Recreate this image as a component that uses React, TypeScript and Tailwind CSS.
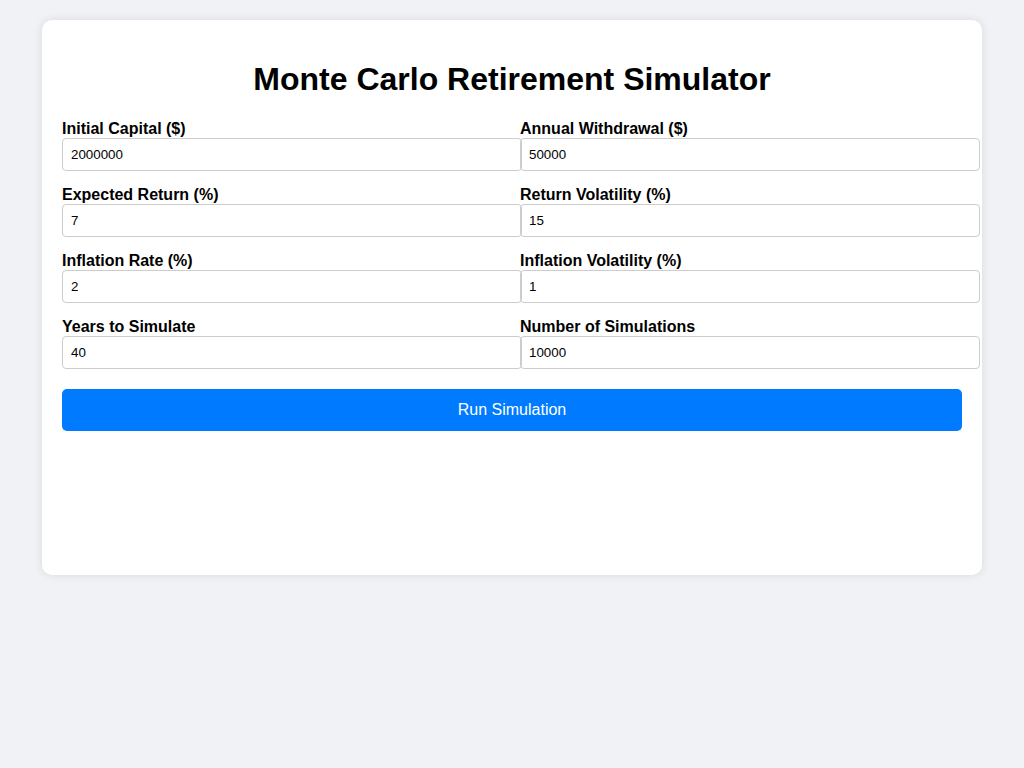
const fields: { label: string; value: string }[] = [
  { label: "Initial Capital ($)", value: "2000000" },
  { label: "Annual Withdrawal ($)", value: "50000" },
  { label: "Expected Return (%)", value: "7" },
  { label: "Return Volatility (%)", value: "15" },
  { label: "Inflation Rate (%)", value: "2" },
  { label: "Inflation Volatility (%)", value: "1" },
  { label: "Years to Simulate", value: "40" },
  { label: "Number of Simulations", value: "10000" },
];

function App(): JSX.Element {
  return (
    <div className="min-h-screen bg-[#f0f2f5] pt-5 font-['Liberation_Sans',Arial,sans-serif] text-black">
      <div className="mx-auto w-[940px] rounded-[10px] bg-white p-5 shadow-[0_0_10px_rgba(0,0,0,0.1)]">
        <h1 className="my-[21.44px] text-center text-[32px] font-bold leading-[normal]">
          Monte Carlo Retirement Simulator
        </h1>
        <div className="grid grid-cols-2 gap-x-4">
          {fields.map((f) => (
            <div key={f.label} className="mb-[15px]">
              <label className="block text-base font-bold leading-[normal]">
                {f.label}
              </label>
              <input
                className="h-[33px] w-[460px] rounded border border-[#ccc] px-2 text-[13.33px] leading-[normal] outline-none"
                type="number"
                defaultValue={f.value}
              />
            </div>
          ))}
        </div>
        <button
          className="mt-[5px] h-[42px] w-full rounded-[5px] bg-[#007bff] text-base leading-[normal] text-white"
          type="button"
        >
          Run Simulation
        </button>
        <div className="h-[124px]" />
      </div>
    </div>
  );
}

export default App;
